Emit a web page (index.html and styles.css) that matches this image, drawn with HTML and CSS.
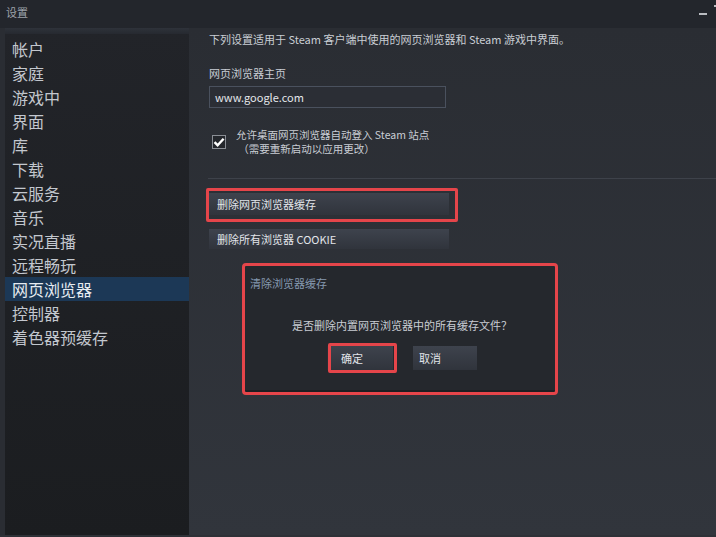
FILE: index.html
```html
<!DOCTYPE html>
<html lang="zh-CN">
<head>
    <meta charset="UTF-8">
    <meta name="viewport" content="width=device-width, initial-scale=1.0">
    <title>设置</title>
    <link rel="stylesheet" href="styles.css">
</head>
<body>
    <div class="titlebar">
        <span class="title">设置</span>
        <span class="win-min"></span>
        <span class="win-close"></span>
    </div>

    <div class="window">
        <nav class="sidebar">
            <div class="sidebar-top"></div>
            <div class="nav-item">帐户</div>
            <div class="nav-item">家庭</div>
            <div class="nav-item">游戏中</div>
            <div class="nav-item">界面</div>
            <div class="nav-item">库</div>
            <div class="nav-item">下载</div>
            <div class="nav-item">云服务</div>
            <div class="nav-item">音乐</div>
            <div class="nav-item">实况直播</div>
            <div class="nav-item">远程畅玩</div>
            <div class="nav-item active">网页浏览器</div>
            <div class="nav-item">控制器</div>
            <div class="nav-item">着色器预缓存</div>
        </nav>

        <main class="main">
            <p class="intro">下列设置适用于 Steam 客户端中使用的网页浏览器和 Steam 游戏中界面。</p>

            <div class="field-label">网页浏览器主页</div>
            <div class="text-input">www.google.com</div>

            <div class="check-row">
                <span class="checkbox">
                    <svg width="12" height="12" viewBox="0 0 12 12">
                        <path d="M1.5 6.2 L4.6 9.2 L10.6 2.8" fill="none" stroke="#fff" stroke-width="2.4"/>
                    </svg>
                </span>
                <div class="check-label">
                    <div>允许桌面网页浏览器自动登入 Steam 站点</div>
                    <div>&nbsp;（需要重新启动以应用更改）</div>
                </div>
            </div>

            <div class="divider"></div>

            <div class="btn wide marked">删除网页浏览器缓存</div>
            <div class="btn wide second">删除所有浏览器 COOKIE</div>

            <div class="dialog">
                <div class="dialog-title">清除浏览器缓存</div>
                <div class="dialog-msg">是否删除内置网页浏览器中的所有缓存文件？</div>
                <div class="dialog-actions">
                    <div class="btn small ok marked-ok">确定</div>
                    <div class="btn small">取消</div>
                </div>
            </div>
        </main>
    </div>
    <div class="bottom-edge"></div>
</body>
</html>
```

FILE: styles.css
```css
body {
    margin: 0;
    width: 716px;
    height: 537px;
    overflow: hidden;
    background: #2a2d33;
    color: #c6cad1;
    font-family: "Noto Sans CJK SC", "Liberation Sans", sans-serif;
}
.titlebar {
    height: 28px;
    background: #23262c;
    display: flex;
    align-items: center;
    position: relative;
}
.title {
    margin-left: 6px;
    margin-top: -4px;
    font-size: 11px;
    color: #9ea3ab;
}
.win-min {
    position: absolute;
    left: 699px;
    top: 13px;
    width: 8px;
    height: 2px;
    background: #b9bcc1;
}
.win-close {
    position: absolute;
    left: 714px;
    top: 5px;
    width: 2px;
    height: 2px;
    background: #b9bcc1;
}
.window {
    display: flex;
    height: 507px;
    padding-left: 5px;
}
.sidebar {
    width: 184px;
    background: linear-gradient(#222429, #1b1d20);
    display: flex;
    flex-direction: column;
}
.sidebar-top {
    height: 6px;
    background: linear-gradient(#2e323a, #262930);
    margin-bottom: 3px;
}
.nav-item {
    font-size: 16px;
    line-height: 24px;
    padding-left: 7px;
    color: #c3c7ce;
}
.nav-item.active {
    background: #1c3856;
    color: #e6ebf1;
}
.main {
    flex: 1;
    position: relative;
    padding-left: 20px;
    background: linear-gradient(#2a2d33, #31353c);
}
.intro {
    margin: 4px 0 0;
    font-size: 11px;
    line-height: 14px;
    color: #c9cdd4;
}
.field-label {
    margin-top: 20px;
    font-size: 11px;
    line-height: 14px;
    color: #c9cdd4;
}
.text-input {
    margin-top: 6px;
    width: 230px;
    height: 20px;
    border: 1px solid #4a515e;
    background: #2b2e35;
    font-size: 11px;
    line-height: 20px;
    padding-left: 5px;
    color: #e4e7eb;
}
.check-row {
    margin-top: 20px;
    display: flex;
    align-items: flex-start;
}
.checkbox {
    margin: 7px 0 0 3px;
    width: 12px;
    height: 12px;
    border: 1px solid #8a8e95;
    background: #24272c;
    display: flex;
    align-items: center;
    justify-content: center;
}
.check-label {
    margin-left: 10px;
    font-size: 10.5px;
    line-height: 14px;
    color: #c9cdd4;
}
.divider {
    margin: 22px 0 0 -1px;
    height: 1px;
    background: #3e424a;
}
.btn {
    font-size: 11px;
    color: #e2e5ea;
    background: linear-gradient(#3e434d, #30343c);
    padding-left: 8px;
    box-sizing: border-box;
}
.btn.wide {
    width: 240px;
    height: 22px;
    line-height: 22px;
    margin-top: 14px;
}
.btn.second {
    height: 20px;
    line-height: 20px;
}
.marked, .marked-ok {
    position: relative;
}
.marked::after, .marked-ok::after {
    content: "";
    position: absolute;
    border: 3px solid #e5454a;
    border-radius: 2px;
}
.marked::after {
    top: -5px;
    left: -3px;
    right: -9px;
    bottom: -7px;
}
.marked-ok::after {
    top: -3px;
    left: -3px;
    right: -4px;
    bottom: -3px;
}
.dialog {
    position: absolute;
    left: 56px;
    top: 238px;
    width: 310px;
    height: 124px;
    background: #25282d;
    border-bottom: 2px solid #1c1e22;
    outline: 3px solid #e5454a;
    border-radius: 1px;
}
.dialog-title {
    margin: 10px 0 0 5px;
    font-size: 11px;
    line-height: 14px;
    color: #8699b0;
}
.dialog-msg {
    margin-top: 28px;
    text-align: center;
    font-size: 11px;
    line-height: 14px;
    padding-left: 4px;
    color: #c9cdd4;
}
.dialog-actions {
    margin-top: 14px;
    display: flex;
    justify-content: center;
    gap: 20px;
    padding-left: 4px;
}
.btn.small {
    width: 64px;
    height: 24px;
    line-height: 24px;
    padding-left: 6px;
}
.btn.ok {
    width: 66px;
    padding-left: 10px;
    border-left: 4px solid #2a2d33;
}
.bottom-edge {
    height: 2px;
    background: #2e3137;
}
```
